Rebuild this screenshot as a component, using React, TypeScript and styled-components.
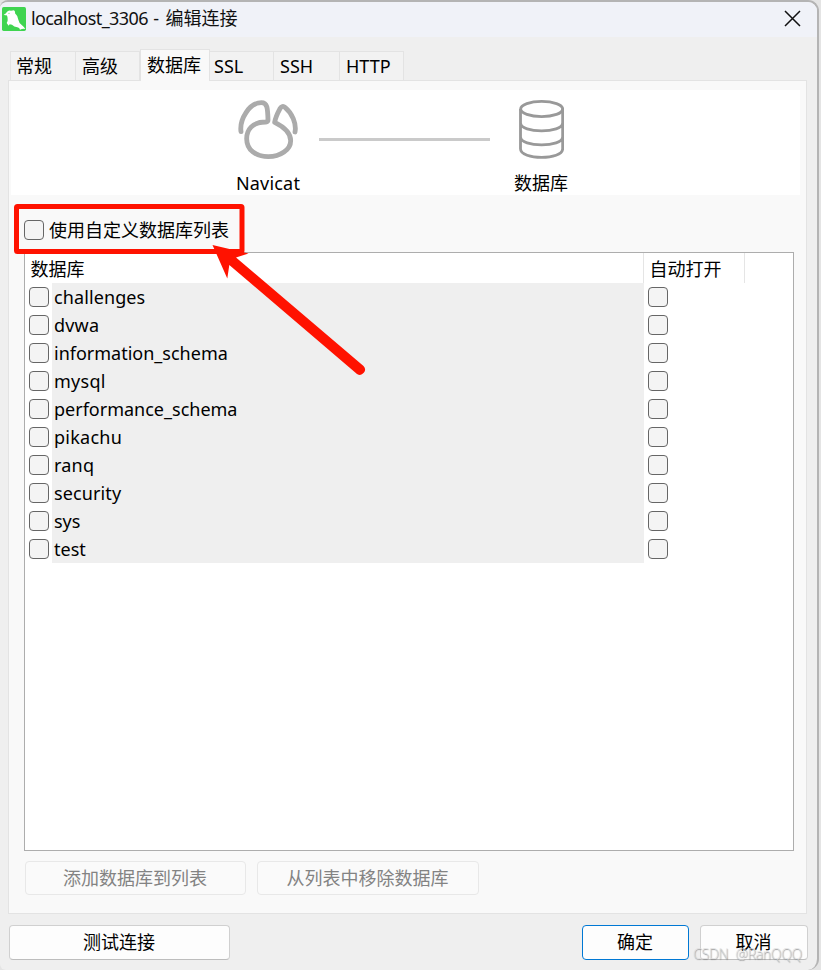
import React from "react";
import styled, { createGlobalStyle } from "styled-components";

const Global = createGlobalStyle`
  * { box-sizing: border-box; }
  html, body { margin: 0; padding: 0; overflow: hidden; background: #e4e4e4; }
`;

const Window = styled.div`
  position: relative;
  width: 819px;
  height: 970px;
  display: flex;
  flex-direction: column;
  background: #efefef;
  border-top: 2px solid #b4b4b4;
  border-right: 2px solid #b4b4b4;
  border-radius: 8px 11px 11px 6px;
  overflow: hidden;
  color: #000;
  font: 18px/24px "Noto Sans", "Noto Sans CJK SC", sans-serif;
  white-space: nowrap;
`;

const Label = styled.span<{ $track?: number }>`
  letter-spacing: ${(p) => p.$track ?? 0}px;
`;

const TitleBar = styled.header`
  height: 35px;
  flex: none;
  display: flex;
  align-items: center;
  padding: 0 16px 2px 2px;
  background: #f0f2f8;
`;

const Title = styled.h1`
  flex: 1;
  margin: -1px 0 0 5px;
  color: #111;
  font-size: 18px;
  font-weight: 400;
  line-height: 24px;
`;

const CloseButton = styled.button`
  display: flex;
  padding: 0;
  border: 0;
  background: none;
`;

const TabList = styled.nav`
  height: 43px;
  flex: none;
  display: flex;
  align-items: flex-end;
  padding-left: 10px;
  z-index: 1;
`;

const Tab = styled.button<{ $width: number; $inset: number; $active?: boolean }>`
  width: ${(p) => p.$width}px;
  height: ${(p) => (p.$active ? 32 : 29)}px;
  margin-bottom: ${(p) => (p.$active ? -1 : 0)}px;
  padding: 0 0 ${(p) => (p.$active ? 1 : 0)}px ${(p) => p.$inset}px;
  border: 1px solid #e3e3e3;
  border-width: ${(p) => (p.$active ? "1px 1px 0 1px" : "1px 1px 0 0")};
  background: ${(p) => (p.$active ? "#f9f9f9" : "#f2f2f2")};
  color: #000;
  font: inherit;
  text-align: left;
  &:first-child { border-left-width: 1px; }
`;

const Panel = styled.main`
  width: 799px;
  height: 834px;
  flex: none;
  margin-left: 8px;
  padding: 9px 6px 0 2px;
  border: 1px solid #e3e3e3;
  background: #f9f9f9;
`;

const Diagram = styled.section`
  height: 105px;
  width: 789px;
  display: flex;
  padding: 7px 0 0 224px;
  background: #fff;
`;

const Endpoint = styled.figure<{ $width: number }>`
  width: ${(p) => p.$width}px;
  margin: 0;
  display: flex;
  flex-direction: column;
  align-items: center;
  svg { display: block; }
`;

const Caption = styled.figcaption`
  margin-top: 9px;
  line-height: 24px;
`;

const Wire = styled.div`
  width: 171px;
  height: 3px;
  margin: 41px 23px 0 18px;
  background: #cacaca;
`;

const CustomOption = styled.label`
  display: flex;
  align-items: center;
  gap: 5px;
  height: 30px;
  margin: 20px 0 7px 13px;
`;

const Box = styled.input.attrs({ type: "checkbox" })`
  appearance: none;
  width: 20px;
  height: 20px;
  flex: none;
  margin: 0;
  border: 1px solid #666;
  border-radius: 4px;
  background: #f4f4f4;
`;

const Table = styled.section`
  width: 770px;
  height: 599px;
  margin-left: 13px;
  border: 1px solid #adadad;
  background: #fff;
`;

const HeaderRow = styled.div`
  display: flex;
  height: 30px;
`;

const HeaderCell = styled.div<{ $width: number }>`
  width: ${(p) => p.$width}px;
  padding: 4px 0 0 5.5px;
  border-right: 1px solid #e5e5e5;
`;

const Row = styled.div`
  height: 28px;
  display: flex;
  align-items: center;
  padding-left: 4px;
`;

const NameCell = styled.div`
  width: 592px;
  height: 28px;
  margin: 0 4px 0 3px;
  padding: 2px 0 0 2px;
  background: #efefef;
`;

const Actions = styled.div`
  display: flex;
  gap: 11px;
  margin: 10px 0 0 14px;
`;

const Button = styled.button<{ $width: number; $primary?: boolean }>`
  width: ${(p) => p.$width}px;
  height: 35px;
  padding: 0 1px 1px 0;
  border: 1px solid ${(p) => (p.$primary ? "#0078d4" : "#d0d0d0")};
  border-bottom-color: ${(p) => (p.$primary ? "#0078d4" : "#bdbdbd")};
  border-radius: 4px;
  background: #fdfdfd;
  color: #000;
  font: inherit;
  &:disabled {
    height: 34px;
    border-color: #e8e8e8;
    background: #fafafa;
    color: #838383;
  }
`;

const Footer = styled.footer`
  display: flex;
  gap: 11px;
  padding: 11px 9px 0;
  > :first-child { margin-right: auto; }
`;

const Overlay = styled.svg`
  position: absolute;
  left: 0;
  top: 190px;
  pointer-events: none;
`;

const Watermark = styled.div`
  position: absolute;
  right: 15px;
  bottom: 6px;
  color: rgba(225, 225, 225, 0.8);
  font: 300 14px/20px "Open Sans", Lato, sans-serif;
  letter-spacing: -0.3px;
  word-spacing: 4px;
  text-shadow: 0.5px 0.5px 1px #888;
`;

const databases: [string, number][] = [
  ["challenges", 0.1],
  ["dvwa", 0.2],
  ["information_schema", 0],
  ["mysql", 0.25],
  ["performance_schema", 0],
  ["pikachu", 0.25],
  ["ranq", 0.2],
  ["security", 0.12],
  ["sys", 0],
  ["test", 0],
];

const AppIcon = () => (
  <svg width="24" height="24" viewBox="6 18 72 72">
    <rect x="6" y="18" width="72" height="72" rx="5" fill="#3fd450" />
    <path
      d="M11 41 Q17 39 20 34 Q24 27 33 29 L42 28 Q47 32 45 37 Q54 45 55 56 Q57 67 66 73 Q72 78 76 84 Q68 82 60 86 Q59 80 52 79 Q42 77 36 71 L29 70 L26 74 L20 66 Q24 62 23 54 Q23 47 20 43 Q15 43 11 41 Z"
      fill="#fff"
    />
    <circle cx="27" cy="37" r="1.6" fill="#3fd450" />
  </svg>
);

const NavicatIcon = () => (
  <svg width="66" height="65" viewBox="45 35 198 195" fill="none" stroke="#ababab" strokeWidth="14.5" strokeLinecap="round" strokeLinejoin="round">
    <path d="M63 139 C58 102 88 52 124 52 C142 52 143 68 144 104 Q144 109 137 110 C96 110 80 134 80 160 C80 194 108 214 145 214 C181 214 212 193 212 166 C212 143 195 126 164 111 C166 98 173 83 180 70 Q187 59 195 66 C216 83 230 115 225 140" />
  </svg>
);

const DatabaseIcon = () => (
  <svg width="46" height="65" viewBox="264 35 138 195" fill="none" stroke="#999" strokeWidth="8.5">
    <ellipse cx="335" cy="71" rx="63" ry="23" />
    <path d="M271.500 71 V190 C271.500 225 398 225 398 190 V71 M271.500 112 C271.500 145 398 145 398 112 M271.500 154 C271.500 187 398 187 398 154" />
  </svg>
);

export default function App() {
  return (
    <>
      <Global />
      <Window>
        <TitleBar>
          <AppIcon />
          <Title><Label $track={-0.6}>localhost_3306</Label><Label $track={0.8}> - </Label>编辑连接</Title>
          <CloseButton aria-label="关闭">
            <svg width="17" height="17" viewBox="0 0 17 17" stroke="#111" strokeWidth="1.5">
              <path d="M1 1 L16 16 M16 1 L1 16" />
            </svg>
          </CloseButton>
        </TitleBar>
        <TabList>
          <Tab $width={66} $inset={5}>常规</Tab>
          <Tab $width={64} $inset={6}>高级</Tab>
          <Tab $width={70} $inset={6} $active>数据库</Tab>
          <Tab $width={64} $inset={4}>SSL</Tab>
          <Tab $width={66} $inset={6}>SSH</Tab>
          <Tab $width={64} $inset={6}>HTTP</Tab>
        </TabList>
        <Panel>
          <Diagram>
            <Endpoint $width={66}>
              <NavicatIcon />
              <Caption><Label $track={0.2}>Navicat</Label></Caption>
            </Endpoint>
            <Wire />
            <Endpoint $width={56}>
              <DatabaseIcon />
              <Caption>数据库</Caption>
            </Endpoint>
          </Diagram>
          <CustomOption>
            <Box />
            使用自定义数据库列表
          </CustomOption>
          <Table>
            <HeaderRow>
              <HeaderCell $width={619}>数据库</HeaderCell>
              <HeaderCell $width={101}>自动打开</HeaderCell>
            </HeaderRow>
            {databases.map(([name, track]) => (
              <Row key={name}>
                <Box />
                <NameCell><Label $track={track}>{name}</Label></NameCell>
                <Box />
              </Row>
            ))}
          </Table>
          <Actions>
            <Button $width={221} disabled>添加数据库到列表</Button>
            <Button $width={222} disabled>从列表中移除数据库</Button>
          </Actions>
        </Panel>
        <Footer>
          <Button $width={221}>测试连接</Button>
          <Button $width={107} $primary>确定</Button>
          <Button $width={108}>取消</Button>
        </Footer>
        <Overlay width="400" height="200" viewBox="0 192 400 200">
          <rect x="16.500" y="206.500" width="225.500" height="45" rx="1" fill="none" stroke="#ff1200" strokeWidth="5" />
          <path d="M212.500 245 L248.500 253.500 L236 257.500 L363.500 366 A5.200 5.200 0 0 1 357 374 L229.300 265 L227.300 278.500 Z" fill="#ff1200" />
        </Overlay>
        <Watermark>CSDN @RanQQQ</Watermark>
      </Window>
    </>
  );
}
